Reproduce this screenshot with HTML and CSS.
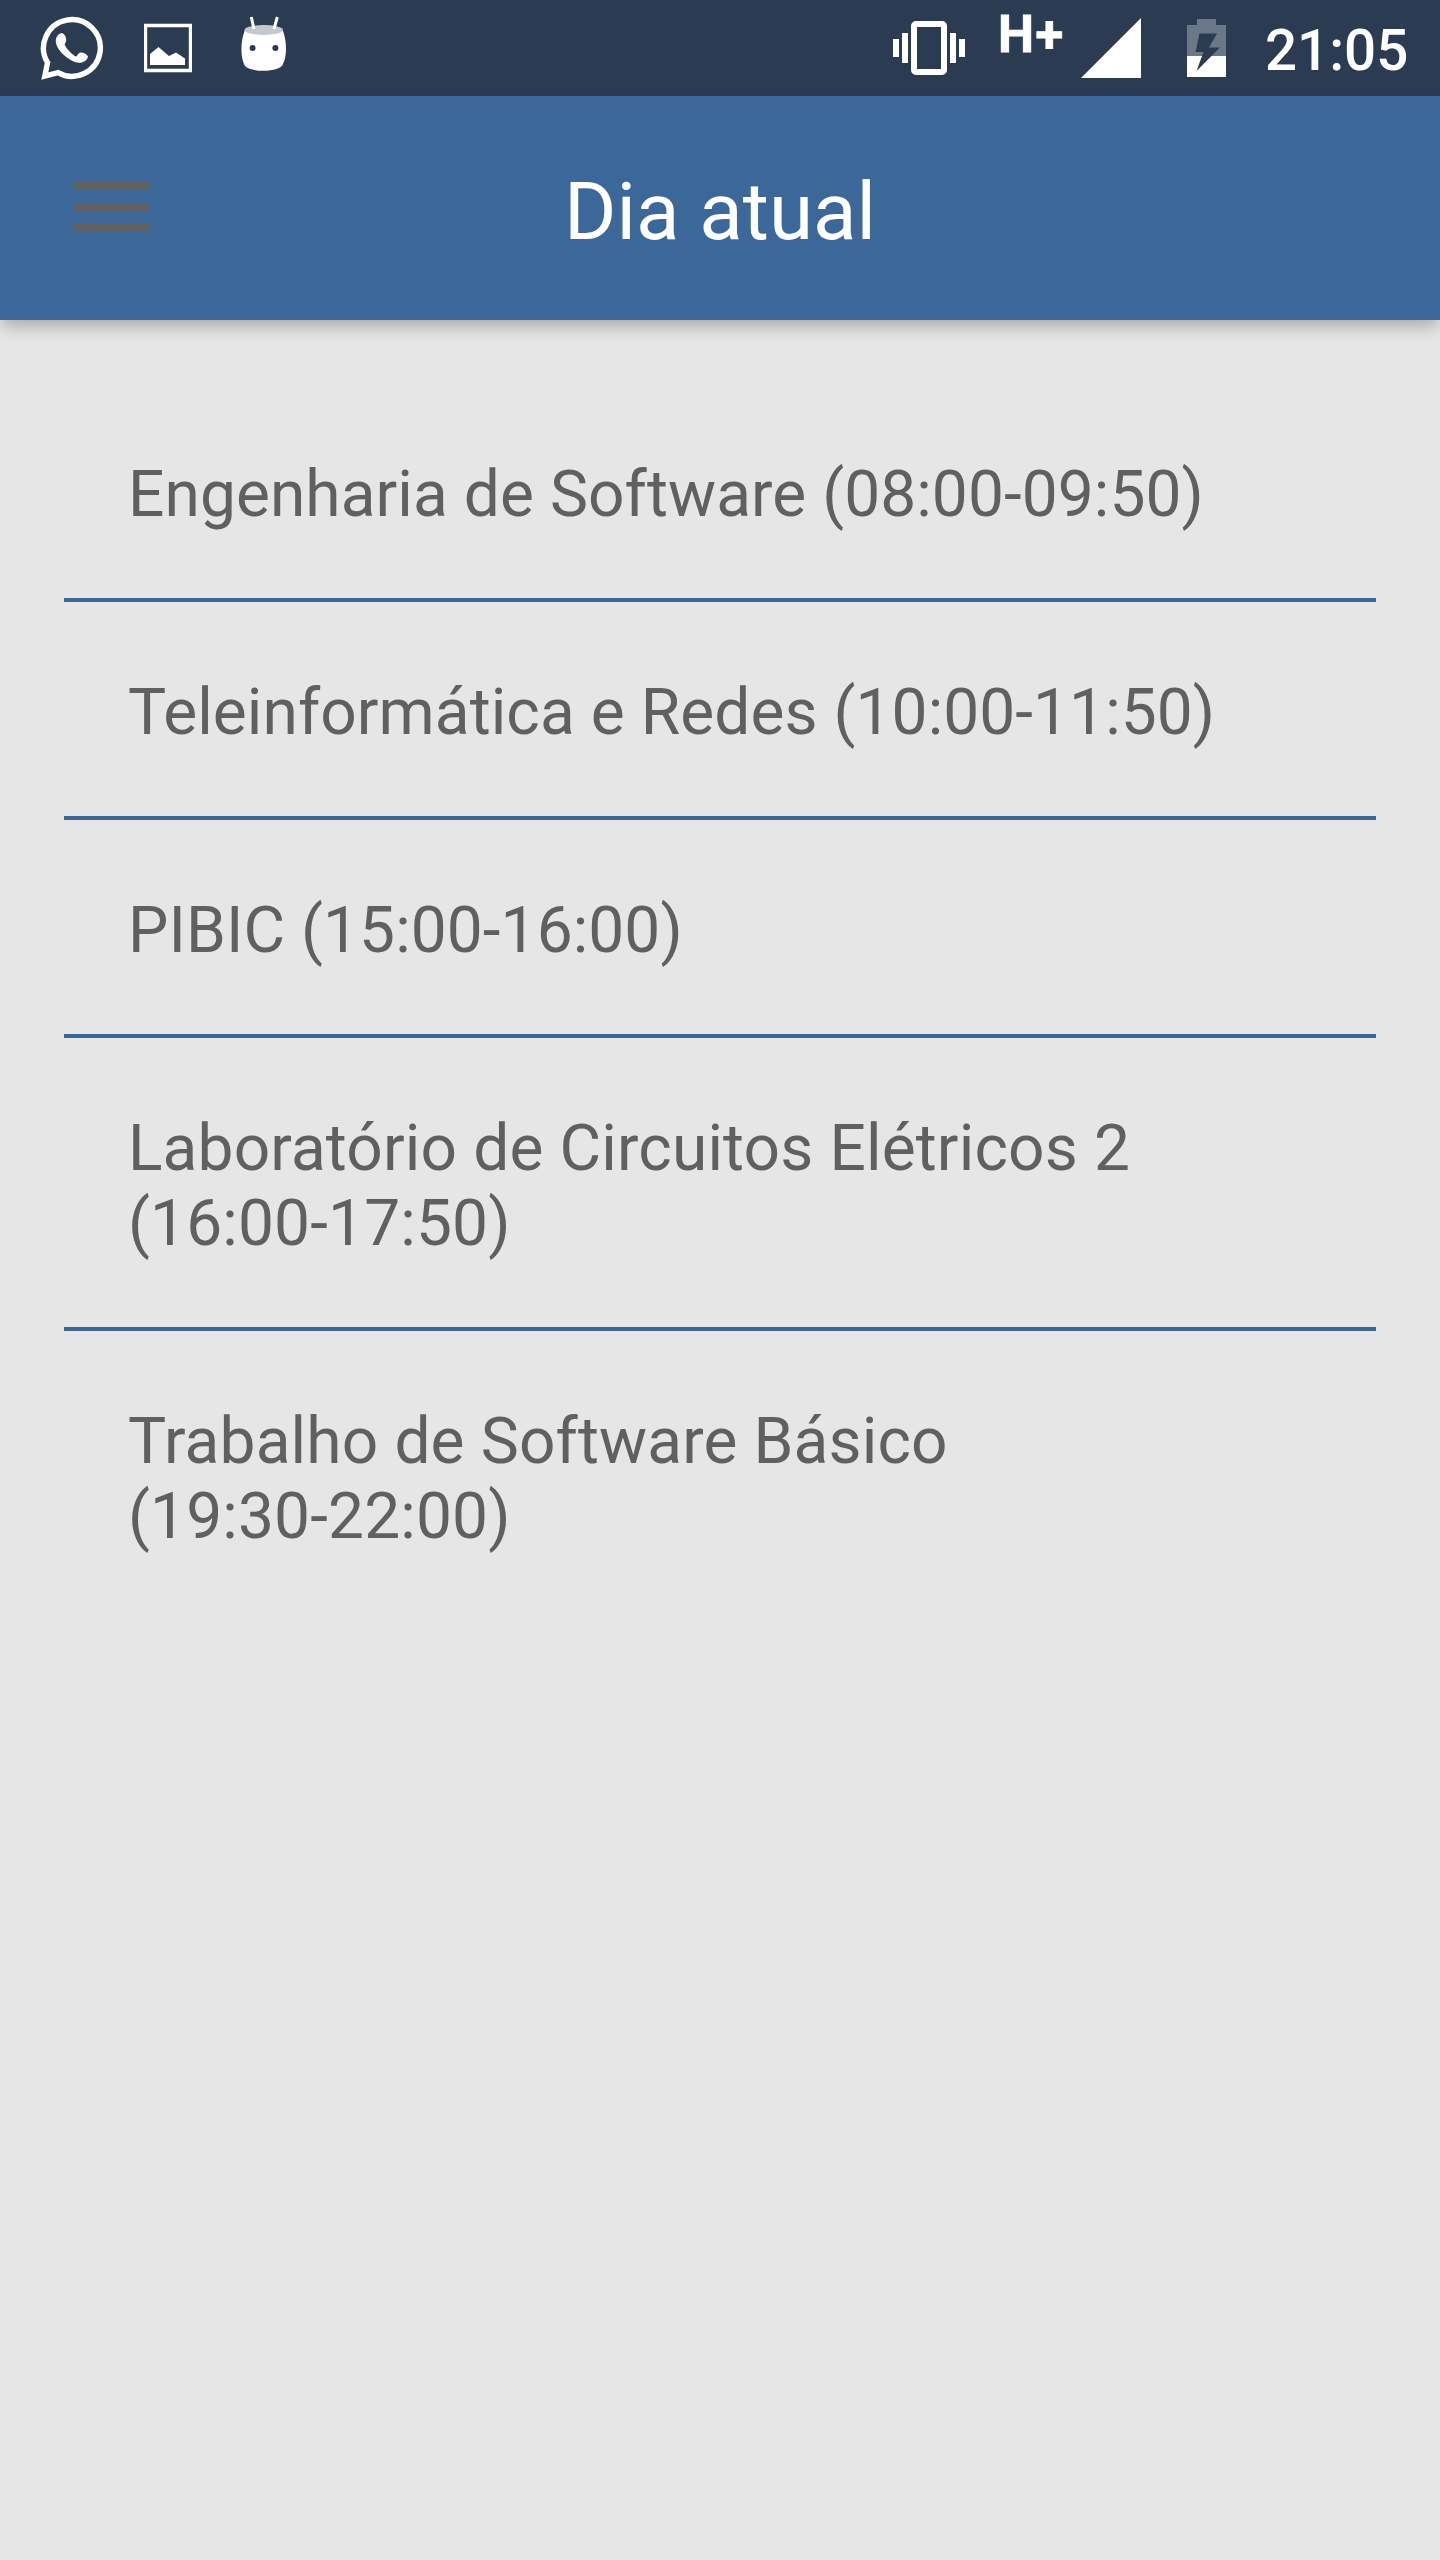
FILE: index.html
```
<!DOCTYPE html>
<html lang="pt-BR">
<head>
<meta charset="utf-8">
<title>Dia atual</title>
<link rel="stylesheet" href="styles.css">
</head>
<body>
<div class="status">
  <div class="group">
    <svg class="whatsapp" viewBox="40 0 64 96" width="64" height="96"><path d="M44.800 76 47.600 62.600A28.400 28.400 0 1 1 58 72.700Z" fill="none" stroke="#fff" stroke-width="5.400"/><path d="M56 39c1-4 4-6.500 7-5.500 3 2 4.500 7 2 10-2 2 8 12 11 13 2-1 2-4 5-4 3 0 6 2 7 4-1 5-6 7-11 6C67 60 54 48 56 39Z" fill="#fff"/></svg>
    <svg class="picture" viewBox="144 0 48 96" width="48" height="96"><path d="M145.500 25.500h45v45h-45Z" fill="none" stroke="#fff" stroke-width="3.400"/><path d="M150 54l8.500-7 10.500 9 7-3.500 9 6V65h-35Z" fill="#fff"/></svg>
    <svg class="robot" viewBox="240 0 48 96" width="48" height="96"><path d="M244.500 31C240.500 42 240.500 56 244 64c2 9 37 9 39 0 4-8 4-22 0-33Z" fill="#fff"/><ellipse cx="263.700" cy="30" rx="19.300" ry="5" fill="#c4c9cf"/><path d="M251.300 17 254 29M277.300 17 274 29" stroke="#fff" stroke-width="3"/><circle cx="252.600" cy="48" r="3" fill="#2b3c52"/><circle cx="275.400" cy="48" r="3" fill="#2b3c52"/></svg>
  </div>
  <div class="group system">
    <svg class="vibrate" viewBox="893 0 72 96" width="72" height="96"><path d="M893 39h6v18h-6ZM902 33h6v30h-6ZM950 33h6v30h-6ZM959 39h6v18h-6Z" fill="#fff"/><rect x="914" y="24" width="30" height="48" rx="2" fill="none" stroke="#fff" stroke-width="6"/></svg>
    <span class="network">H+</span>
    <svg class="signal" viewBox="1081 0 60 96" width="60" height="96"><path d="M1081 78 1141 18V78Z" fill="#fff"/></svg>
    <svg class="battery" viewBox="1187 0 39 96" width="39" height="96"><path d="M1187 25h10v-6h19v6h10v31h-39Z" fill="#6b7888"/><path d="M1187 56h39v21h-39Z" fill="#fff"/><path d="M1199.500 33.500H1217L1209 47.500H1220L1196.500 71 1203.500 52H1195.500Z" fill="#2b3c52"/></svg>
    <span class="clock">21:05</span>
  </div>
</div>
<header class="appbar">
  <svg class="menu" viewBox="0 0 75 50" width="75" height="50"><path d="M0 0h75v8H0ZM0 21h75v8H0ZM0 42h75v8H0Z" fill="#606060"/></svg>
  <h1>Dia atual</h1>
</header>
<ul class="classes">
  <li>Engenharia de Software <span>(08:00-09:50)</span></li>
  <li>Teleinformática e Redes <span>(10:00-11:50)</span></li>
  <li>PIBIC <span>(15:00-16:00)</span></li>
  <li class="long">Laboratório de Circuitos Elétricos 2 <span>(16:00-17:50)</span></li>
  <li class="long">Trabalho de Software Básico <span>(19:30-22:00)</span></li>
</ul>
</body>
</html>
```
FILE: styles.css
```
body{margin:0;min-height:2560px;background:#e6e6e6;font-family:Roboto,sans-serif;color:#606060}
svg{display:block;flex:none}
.status{box-sizing:border-box;width:1440px;height:96px;background:#2b3c52;color:#fff;display:flex;justify-content:space-between;padding:0 0 0 40px}
.group{display:flex;gap:40px}
.robot{margin-left:8px}
.system{gap:0;width:547px}
.network{margin-left:33px;width:68px;flex:none;font-size:51px;font-weight:700;line-height:69px;letter-spacing:1.5px;white-space:nowrap;-webkit-text-stroke:.8px #fff}
.signal{margin-left:15px}
.battery{margin-left:46px}
.clock{margin-left:39px;font-size:56.5px;font-weight:500;line-height:102px}
.appbar{box-sizing:border-box;height:224px;background:#3c6899;color:#fff;display:grid;grid-template-columns:1fr auto 1fr;align-items:center;padding:0 74px;box-shadow:0 8px 16px -2px rgba(0,0,0,.27)}
.menu{margin-bottom:2px}
h1{font-size:80px;font-weight:400;line-height:94px;margin:8px 0 0}
.classes{list-style:none;margin:64px;padding:0}
li{font-size:64px;line-height:75px;letter-spacing:.08px;padding:73px 64px 66px;border-bottom:4px solid #3c6899}
li.long{letter-spacing:.15px}
li span{white-space:nowrap}
li:last-child{border:0}
```
